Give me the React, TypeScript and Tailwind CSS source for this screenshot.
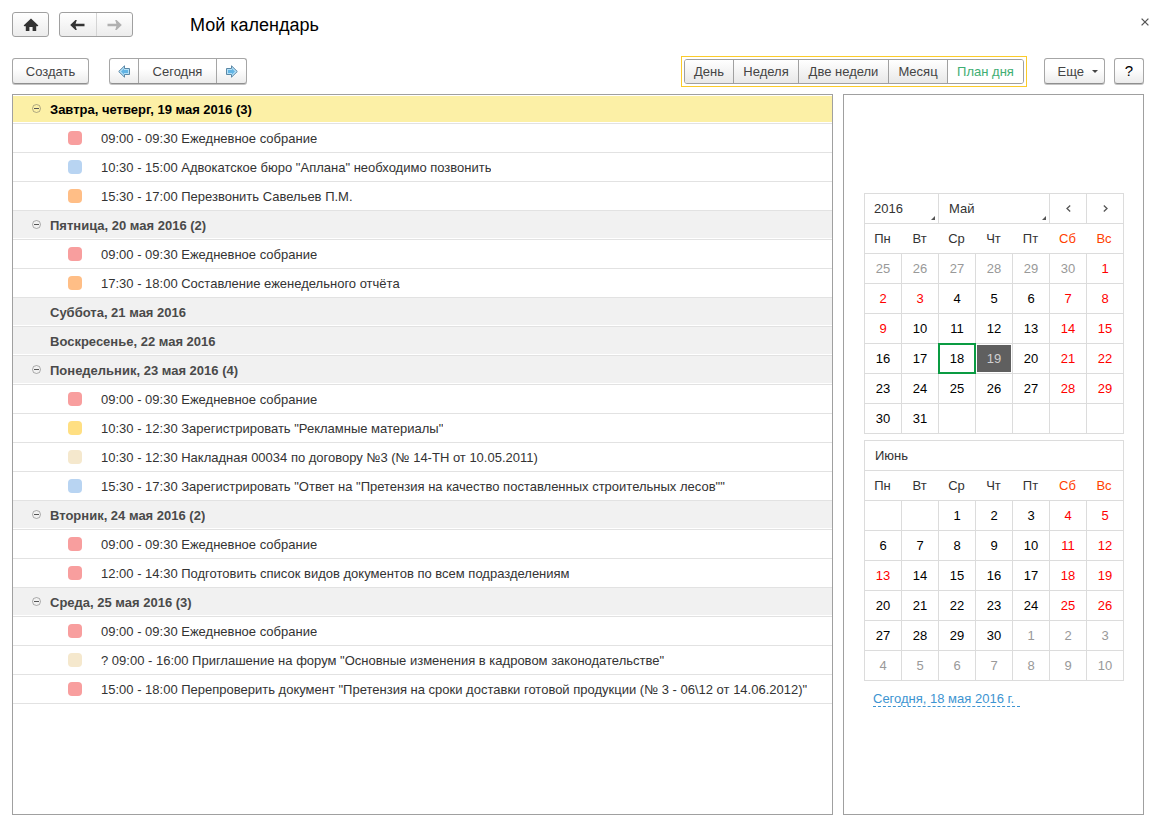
import { useState } from "react";

type Tone = "red" | "blue" | "orange" | "yellow" | "sand";

interface CalendarEvent {
  tone: Tone;
  text: string;
}

interface DayGroup {
  title: string;
  highlighted?: boolean;
  events: CalendarEvent[];
}

const toneClass: Record<Tone, string> = {
  red: "bg-[#f89e9e]",
  blue: "bg-[#b8d4f2]",
  orange: "bg-[#ffbe86]",
  yellow: "bg-[#ffdf82]",
  sand: "bg-[#f5e8cd]",
};

const groups: DayGroup[] = [
  {
    title: "Завтра, четверг, 19 мая 2016 (3)",
    highlighted: true,
    events: [
      { tone: "red", text: "09:00 - 09:30 Ежедневное собрание" },
      { tone: "blue", text: '10:30 - 15:00 Адвокатское бюро "Аплана" необходимо позвонить' },
      { tone: "orange", text: "15:30 - 17:00 Перезвонить Савельев П.М." },
    ],
  },
  {
    title: "Пятница, 20 мая 2016 (2)",
    events: [
      { tone: "red", text: "09:00 - 09:30 Ежедневное собрание" },
      { tone: "orange", text: "17:30 - 18:00 Составление еженедельного отчёта" },
    ],
  },
  { title: "Суббота, 21 мая 2016", events: [] },
  { title: "Воскресенье, 22 мая 2016", events: [] },
  {
    title: "Понедельник, 23 мая 2016 (4)",
    events: [
      { tone: "red", text: "09:00 - 09:30 Ежедневное собрание" },
      { tone: "yellow", text: '10:30 - 12:30 Зарегистрировать "Рекламные материалы"' },
      { tone: "sand", text: "10:30 - 12:30 Накладная 00034 по договору №3 (№ 14-ТН от 10.05.2011)" },
      {
        tone: "blue",
        text: '15:30 - 17:30 Зарегистрировать "Ответ на "Претензия на качество поставленных строительных лесов""',
      },
    ],
  },
  {
    title: "Вторник, 24 мая 2016 (2)",
    events: [
      { tone: "red", text: "09:00 - 09:30 Ежедневное собрание" },
      { tone: "red", text: "12:00 - 14:30 Подготовить список видов документов по всем подразделениям" },
    ],
  },
  {
    title: "Среда, 25 мая 2016 (3)",
    events: [
      { tone: "red", text: "09:00 - 09:30 Ежедневное собрание" },
      {
        tone: "sand",
        text: '? 09:00 - 16:00 Приглашение на форум "Основные изменения в кадровом законодательстве"',
      },
      {
        tone: "red",
        text: '15:00 - 18:00 Перепроверить документ "Претензия на сроки доставки готовой продукции (№ 3 - 06\\12 от 14.06.2012)"',
      },
    ],
  },
];

const weekdays = ["Пн", "Вт", "Ср", "Чт", "Пт", "Сб", "Вс"];

interface Day {
  n: number | null;
  muted?: boolean;
  holiday?: boolean;
}

function buildWeeks(
  before: number[],
  count: number,
  after: (number | null)[],
  holidays: number[],
  leadingBlank = 0,
): Day[][] {
  const days: Day[] = [];
  for (let i = 0; i < leadingBlank; i++) days.push({ n: null });
  for (const n of before) days.push({ n, muted: true });
  for (let n = 1; n <= count; n++) {
    const weekend = days.length % 7 >= 5;
    days.push({ n, holiday: weekend || holidays.includes(n) });
  }
  for (const n of after) days.push({ n, muted: true });
  const weeks: Day[][] = [];
  for (let i = 0; i < days.length; i += 7) weeks.push(days.slice(i, i + 7));
  return weeks;
}

const may = buildWeeks([25, 26, 27, 28, 29, 30], 31, [null, null, null, null, null], [2, 3, 9]);
const june = buildWeeks([], 30, [1, 2, 3, 4, 5, 6, 7, 8, 9, 10], [13], 2);

const navButton = "h-[25px] rounded-[3px] border border-[#a0a0a0] bg-linear-to-b from-white to-[#ececec]";
const raised =
  "mb-px h-[26px] rounded-[3px] border border-[#a6a6a6] border-b-[#8f8f8f] bg-linear-to-b from-white from-40% to-[#ececec] shadow-[0_1px_0_#c4c4c4]";
const cell = "border-r border-b border-[#dcdcdc] p-0";

function HomeIcon() {
  return (
    <svg width="16" height="14" viewBox="0 0 16 14" fill="#333" aria-hidden="true">
      <path d="M8 0.6 0.6 7.6 1.4 8.2H2.8V13H6.4V9H9.6V13H13.2V8.2H14.6L15.4 7.6z" />
    </svg>
  );
}

function ArrowIcon({ flip }: { flip?: boolean }) {
  return (
    <svg
      width="15"
      height="12"
      viewBox="0 0 15 12"
      className={flip ? "rotate-180 text-[#b0b0b0]" : "text-[#333]"}
      aria-hidden="true"
    >
      <path d="M0.2 6 5.4 1H6.8L5.6 4.7H14.5V7.3H5.6L6.8 11H5.4z" fill="currentColor" />
    </svg>
  );
}

function BlueArrow({ flip }: { flip?: boolean }) {
  return (
    <svg width="13" height="13" viewBox="0 0 13 13" className={flip ? "-scale-x-100" : ""} aria-hidden="true">
      <path d="M0.7 6.5 6.5 0.8V3.5H11.5V9.5H6.5V12.2z" fill="#b4e0f7" stroke="#5a87a5" strokeWidth="1" />
      <path d="M3 6.5 6 3.6V5H10V8H6V9.4z" fill="#62b4e4" />
    </svg>
  );
}

function ToggleIcon({ open }: { open: boolean }) {
  return (
    <svg width="9" height="9" viewBox="0 0 9 9" fill="none" stroke="#555" aria-hidden="true">
      <circle cx="4.5" cy="4.5" r="4" strokeOpacity="0.5" strokeWidth="0.9" />
      <path d={open ? "M2 4.5H7" : "M2 4.5H7M4.5 2V7"} />
    </svg>
  );
}

function CornerMark() {
  return (
    <svg
      width="4"
      height="4"
      viewBox="0 0 4 4"
      className="pointer-events-none absolute right-[3px] bottom-[3px]"
      aria-hidden="true"
    >
      <path d="M4 0V4H0z" fill="#555" />
    </svg>
  );
}

function WeekdayRow() {
  return (
    <tr>
      {weekdays.map((d, i) => (
        <th
          key={d}
          scope="col"
          className={`h-[30px] border-b border-[#dcdcdc] p-0 pr-0.5 font-normal ${i > 4 ? "text-[#ff4000]" : "text-[#333]"} ${i === 6 ? "border-r" : ""}`}
        >
          {d}
        </th>
      ))}
    </tr>
  );
}

function DayCells({ weeks, today, selected }: { weeks: Day[][]; today?: number; selected?: number }) {
  return (
    <>
      {weeks.map((week, w) => (
        <tr key={w}>
          {week.map((day, i) => {
            const isToday = !day.muted && day.n !== null && day.n === today;
            const isSelected = !day.muted && day.n !== null && day.n === selected;
            const color = isSelected
              ? "text-[#d0d0d0]"
              : day.muted
                ? "text-[#999]"
                : day.holiday
                  ? "text-[#ff0000]"
                  : "text-black";
            return (
              <td key={i} className={`${cell} relative h-[30px]`}>
                {isToday && <span className="absolute -inset-px border-2 border-[#0a9b42]" />}
                {day.n !== null && (
                  <button
                    type="button"
                    className={`relative block h-[29px] w-full text-center ${color} ${isSelected ? "border border-white bg-[#5f5f5f]" : ""}`}
                  >
                    {day.n}
                  </button>
                )}
              </td>
            );
          })}
        </tr>
      ))}
    </>
  );
}

function GroupRows({ group }: { group: DayGroup }) {
  const [open, setOpen] = useState(true);
  const hasEvents = group.events.length > 0;
  return (
    <section>
      <div className="h-[29px] border-b border-[#e2e2e2] pb-px">
        <div
          className={`flex h-[27px] items-center pl-[19px] ${group.highlighted ? "border-t border-white bg-[#fcf0a6] bg-clip-padding text-black" : "bg-[#f1f1f1] text-[#4a4a4a]"}`}
        >
          <div className="flex w-[18px] shrink-0">
            {hasEvents && (
              <button
                type="button"
                aria-label="Свернуть или развернуть день"
                aria-expanded={open}
                onClick={() => setOpen(!open)}
                className="pb-px"
              >
                <ToggleIcon open={open} />
              </button>
            )}
          </div>
          <h2 className="truncate pt-0.5 font-bold">{group.title}</h2>
        </div>
      </div>
      {open && hasEvents && (
        <ul>
          {group.events.map((event) => (
            <li key={event.text} className="flex h-[29px] items-center border-b border-[#e2e2e2] pl-[55px]">
              <span className={`size-3.5 shrink-0 rounded ${toneClass[event.tone]}`} />
              <span className="truncate pt-0.5 pl-[19px] text-[#333]">{event.text}</span>
            </li>
          ))}
        </ul>
      )}
    </section>
  );
}

const views = [
  { name: "День", width: "w-[49px]" },
  { name: "Неделя", width: "w-[65px]" },
  { name: "Две недели", width: "w-[90px]" },
  { name: "Месяц", width: "w-[59px]" },
  { name: "План дня", width: "w-[75px]" },
];

export default function App() {
  const [view, setView] = useState("План дня");

  return (
    <div className="flex min-h-screen flex-col bg-white pr-[19px] pb-3 pl-3 font-['Liberation_Sans',Arial,sans-serif] text-[13px] leading-4 text-[#444]">
      <header className="flex h-[49px] items-center">
        <button
          type="button"
          aria-label="Начальная страница"
          className={`flex w-[37px] items-center justify-center ${navButton}`}
        >
          <HomeIcon />
        </button>
        <div className={`ml-2.5 flex w-[74px] ${navButton}`}>
          <button
            type="button"
            aria-label="Назад"
            className="flex flex-1 items-center justify-center border-r border-[#d4d4d4]"
          >
            <ArrowIcon />
          </button>
          <button type="button" aria-label="Вперед" className="flex flex-1 items-center justify-center">
            <ArrowIcon flip />
          </button>
        </div>
        <h1 className="ml-[57px] flex-1 text-lg text-black">Мой календарь</h1>
        <button type="button" aria-label="Закрыть" className="-mt-1.5 -mr-[7px] p-0.5">
          <svg width="8" height="8" viewBox="0 0 8 8" stroke="#555" strokeWidth="1.3" aria-hidden="true">
            <path d="M0.6 0.6 7.4 7.4M7.4 0.6 0.6 7.4" />
          </svg>
        </button>
      </header>

      <div className="flex h-[45px] items-center">
        <button type="button" className={`w-[77px] pt-px ${raised}`}>
          Создать
        </button>
        <div className={`ml-5 flex w-[138px] ${raised}`}>
          <button type="button" aria-label="Предыдущий период" className="flex w-7 items-center justify-center">
            <BlueArrow />
          </button>
          <button type="button" className="flex-1 border-x border-[#a6a6a6] pt-0.5">
            Сегодня
          </button>
          <button type="button" aria-label="Следующий период" className="flex w-[29px] items-center justify-center">
            <BlueArrow flip />
          </button>
        </div>

        <div className="ml-auto border border-[#fbcb2a] p-0.5">
          <div className="flex h-[25px] overflow-hidden rounded-[3px] border border-[#a0a0a0]">
            {views.map(({ name, width }) => (
              <button
                key={name}
                type="button"
                aria-pressed={view === name}
                onClick={() => setView(name)}
                className={`border-r border-[#a0a0a0] whitespace-nowrap last:border-r-0 ${width} ${view === name ? "bg-white text-[#3fae73]" : "bg-linear-to-b from-white to-[#e8e8e8]"}`}
              >
                {name}
              </button>
            ))}
          </div>
        </div>

        <button
          type="button"
          className={`ml-[17px] flex w-[61px] items-center justify-end gap-2 pt-px pr-1.5 ${raised}`}
        >
          Еще
          <svg width="6" height="3" viewBox="0 0 6 3" fill="#444" aria-hidden="true">
            <path d="M0 0H6L3 3z" />
          </svg>
        </button>
        <button type="button" aria-label="Справка" className={`ml-[9px] w-[30px] text-[15px] text-black ${raised}`}>
          ?
        </button>
      </div>

      <main className="flex flex-1 gap-2.5">
        <div className="min-w-0 flex-1 border border-[#a0a0a0]">
          {groups.map((group) => (
            <GroupRows key={group.title} group={group} />
          ))}
        </div>

        <aside className="w-[301px] shrink-0 border border-[#a0a0a0] pt-[98px] pl-5">
          <table className="w-[260px] table-fixed border-separate border-spacing-0 border-t border-l border-[#dcdcdc]">
            <thead>
              <tr>
                <td colSpan={2} className={`${cell} relative h-[30px]`}>
                  <select
                    aria-label="Год"
                    defaultValue="2016"
                    className="block h-[29px] w-full appearance-none pl-[9px] text-[#333]"
                  >
                    <option>2015</option>
                    <option>2016</option>
                    <option>2017</option>
                  </select>
                  <CornerMark />
                </td>
                <td colSpan={3} className={`${cell} relative`}>
                  <select
                    aria-label="Месяц"
                    defaultValue="Май"
                    className="block h-[29px] w-full appearance-none pl-2.5 text-[#333]"
                  >
                    <option>Апрель</option>
                    <option>Май</option>
                    <option>Июнь</option>
                  </select>
                  <CornerMark />
                </td>
                <td className={cell}>
                  <button
                    type="button"
                    aria-label="Предыдущий месяц"
                    className="flex h-[29px] w-full items-center justify-center"
                  >
                    <svg width="5" height="7" viewBox="0 0 5 7" fill="none" stroke="#555" strokeWidth="1.3" aria-hidden="true">
                      <path d="M4.2 0.5 1 3.5 4.2 6.5" />
                    </svg>
                  </button>
                </td>
                <td className={cell}>
                  <button
                    type="button"
                    aria-label="Следующий месяц"
                    className="flex h-[29px] w-full items-center justify-center"
                  >
                    <svg width="5" height="7" viewBox="0 0 5 7" fill="none" stroke="#555" strokeWidth="1.3" aria-hidden="true">
                      <path d="M0.8 0.5 4 3.5 0.8 6.5" />
                    </svg>
                  </button>
                </td>
              </tr>
              <WeekdayRow />
            </thead>
            <tbody>
              <DayCells weeks={may} today={18} selected={19} />
            </tbody>
          </table>

          <table className="mt-1.5 w-[260px] table-fixed border-separate border-spacing-0 border-t border-l border-[#dcdcdc]">
            <thead>
              <tr>
                <th
                  colSpan={7}
                  className="h-[30px] border-r border-b border-[#dcdcdc] p-0 pl-2.5 text-left font-normal text-[#333]"
                >
                  Июнь
                </th>
              </tr>
              <WeekdayRow />
            </thead>
            <tbody>
              <DayCells weeks={june} />
            </tbody>
          </table>

          <a
            href="#today"
            className="mt-2.5 ml-[9px] inline-block border-b border-dashed border-[#3d94d1] pr-1.5 leading-[15px] text-[#3d94d1]"
          >
            Сегодня, 18 мая 2016 г.
          </a>
        </aside>
      </main>
    </div>
  );
}
